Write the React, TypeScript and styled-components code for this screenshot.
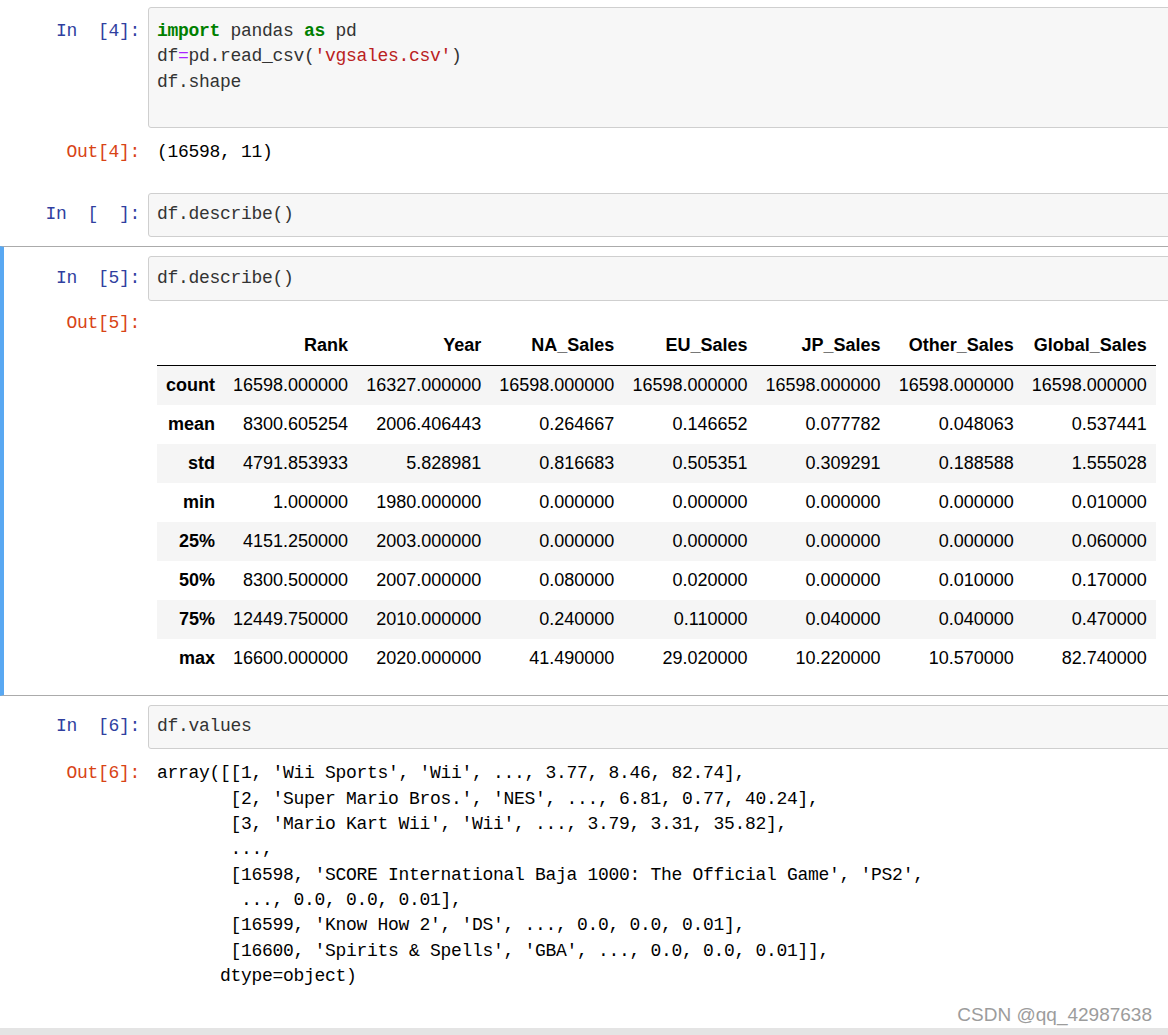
import React, { FC } from 'react'
import styled, { createGlobalStyle } from 'styled-components'

const GlobalStyle = createGlobalStyle`
	html, body {
		margin: 0;
		padding: 0;
		background: #ffffff;
	}
	#root {
		width: 1168px;
	}
`

const MONO = `'Liberation Mono', 'DejaVu Sans Mono', monospace`
const SANS = `'Liberation Sans', Arial, sans-serif`

type Stat = { name: string; values: string[] }

const COLUMNS = ['Rank', 'Year', 'NA_Sales', 'EU_Sales', 'JP_Sales', 'Other_Sales', 'Global_Sales']

const STATS: Stat[] = [
	{ name: 'count', values: ['16598.000000', '16327.000000', '16598.000000', '16598.000000', '16598.000000', '16598.000000', '16598.000000'] },
	{ name: 'mean', values: ['8300.605254', '2006.406443', '0.264667', '0.146652', '0.077782', '0.048063', '0.537441'] },
	{ name: 'std', values: ['4791.853933', '5.828981', '0.816683', '0.505351', '0.309291', '0.188588', '1.555028'] },
	{ name: 'min', values: ['1.000000', '1980.000000', '0.000000', '0.000000', '0.000000', '0.000000', '0.010000'] },
	{ name: '25%', values: ['4151.250000', '2003.000000', '0.000000', '0.000000', '0.000000', '0.000000', '0.060000'] },
	{ name: '50%', values: ['8300.500000', '2007.000000', '0.080000', '0.020000', '0.000000', '0.010000', '0.170000'] },
	{ name: '75%', values: ['12449.750000', '2010.000000', '0.240000', '0.110000', '0.040000', '0.040000', '0.470000'] },
	{ name: 'max', values: ['16600.000000', '2020.000000', '41.490000', '29.020000', '10.220000', '10.570000', '82.740000'] },
]

const ARRAY_OUT = [
	`array([[1, 'Wii Sports', 'Wii', ..., 3.77, 8.46, 82.74],`,
	`       [2, 'Super Mario Bros.', 'NES', ..., 6.81, 0.77, 40.24],`,
	`       [3, 'Mario Kart Wii', 'Wii', ..., 3.79, 3.31, 35.82],`,
	`       ...,`,
	`       [16598, 'SCORE International Baja 1000: The Official Game', 'PS2',`,
	`        ..., 0.0, 0.0, 0.01],`,
	`       [16599, 'Know How 2', 'DS', ..., 0.0, 0.0, 0.01],`,
	`       [16600, 'Spirits & Spells', 'GBA', ..., 0.0, 0.0, 0.01]],`,
	`      dtype=object)`,
]

type CodeCellProps = { count: string; lead?: number; children: React.ReactNode }

const CodeCell: FC<CodeCellProps> = ({ count, lead = 8.5, children }) => (
	<Row>
		<Prompt $kind="in" $lead={lead + 1}>{`In  [${count}]:`}</Prompt>
		<InputArea $lead={lead} $trail={17 - lead}>
			<Code>{children}</Code>
		</InputArea>
	</Row>
)

const StatsTable: FC = () => (
	<DataTable>
		<thead>
			<tr>
				<Th />
				{COLUMNS.map((c) => (
					<Th key={c}>{c}</Th>
				))}
			</tr>
		</thead>
		<tbody>
			{STATS.map((s) => (
				<tr key={s.name}>
					<Th>{s.name}</Th>
					{s.values.map((v, i) => (
						<Td key={i}>{v}</Td>
					))}
				</tr>
			))}
		</tbody>
	</DataTable>
)

const App: FC = () => {
	return (
		<>
			<GlobalStyle />
			<Page>
				<Notebook>
					<Cell>
						<CodeCell count="4" lead={11}>
							<Line>
								<Kw>import</Kw> pandas <Kw>as</Kw> pd
							</Line>
							<Line>
								df<Op>=</Op>pd.read_csv(<Str>'vgsales.csv'</Str>)
							</Line>
							<Line>df.shape</Line>
							<Line>{' '}</Line>
						</CodeCell>
						<OutputRow $gap={12} $tail={10}>
							<Prompt $kind="out">Out[4]:</Prompt>
							<OutText>
								<Line>(16598, 11)</Line>
							</OutText>
						</OutputRow>
					</Cell>

					<Cell>
						<CodeCell count="  ">
							<Line>df.describe()</Line>
						</CodeCell>
					</Cell>

					<Cell $selected>
						<CodeCell count="5">
							<Line>df.describe()</Line>
						</CodeCell>
						<OutputRow $gap={10} $tail={8}>
							<Prompt $kind="out">Out[5]:</Prompt>
							<TableWrap>
								<StatsTable />
							</TableWrap>
						</OutputRow>
					</Cell>

					<Cell>
						<CodeCell count="6">
							<Line>df.values</Line>
						</CodeCell>
						<OutputRow $gap={12} $tail={8}>
							<Prompt $kind="out">Out[6]:</Prompt>
							<OutText>
								{ARRAY_OUT.map((l, i) => (
									<Line key={i}>{l}</Line>
								))}
							</OutText>
						</OutputRow>
					</Cell>
				</Notebook>
				<BottomBar />
				<Watermark>CSDN @qq_42987638</Watermark>
			</Page>
		</>
	)
}

const Page = styled.div`
	position: relative;
	display: flex;
	flex-direction: column;
	width: 1168px;
	height: 1035px;
	overflow: hidden;
	background: #ffffff;
`

const Notebook = styled.div`
	flex: 1;
	margin-top: -2px;
`

const Cell = styled.div<{ $selected?: boolean }>`
	display: flex;
	flex-direction: column;
	margin-right: -40px;
	padding: 9px 0;
	border-left: 4px solid ${({ $selected }) => ($selected ? '#59a8f2' : 'transparent')};
	border-top: ${({ $selected }) => ($selected ? '1px solid #ababab' : 'none')};
	border-bottom: ${({ $selected }) => ($selected ? '1px solid #ababab' : 'none')};
`

const Row = styled.div`
	display: flex;
	align-items: flex-start;
`

const Prompt = styled.div<{ $kind: 'in' | 'out'; $lead?: number }>`
	flex: 0 0 136px;
	padding: ${({ $lead = 0 }) => $lead}px 8px 0 0;
	text-align: right;
	white-space: pre;
	font-family: ${MONO};
	font-size: 18px;
	letter-spacing: -0.3px;
	line-height: 25.4px;
	color: ${({ $kind }) => ($kind === 'in' ? '#303f9f' : '#d84315')};
`

const InputArea = styled.div<{ $lead: number; $trail: number }>`
	flex: 1;
	background: #f7f7f7;
	border: 1px solid #cfcfcf;
	border-radius: 3px;
	padding: ${({ $lead }) => $lead}px 8px ${({ $trail }) => $trail}px;
`

const Code = styled.div`
	font-family: ${MONO};
	font-size: 18px;
	letter-spacing: -0.3px;
	line-height: 25.4px;
	color: #333333;
`

const Line = styled.div`
	height: 25.4px;
	white-space: pre;
`

const Kw = styled.span`
	color: #008000;
	font-weight: bold;
`

const Op = styled.span`
	color: #aa22ff;
`

const Str = styled.span`
	color: #ba2121;
`

const OutputRow = styled.div<{ $gap: number; $tail: number }>`
	display: flex;
	align-items: flex-start;
	margin-top: ${({ $gap }) => $gap}px;
	padding-bottom: ${({ $tail }) => $tail}px;
`

const OutText = styled.div`
	padding-left: 9px;
	font-family: ${MONO};
	font-size: 18px;
	letter-spacing: -0.3px;
	line-height: 25.4px;
	color: #000000;
`

const TableWrap = styled.div`
	padding: 15px 0 0 9px;
`

const DataTable = styled.table`
	border-collapse: collapse;
	border-spacing: 0;
	font-family: ${SANS};
	font-size: 18px;
	color: #000000;

	thead tr {
		border-bottom: 1px solid #000000;
	}

	tbody tr:nth-child(odd) {
		background: #f5f5f5;
	}
`

const Th = styled.th`
	padding: 9px;
	line-height: 21px;
	text-align: right;
	font-weight: bold;
	white-space: nowrap;
`

const Td = styled.td`
	padding: 9px;
	line-height: 21px;
	text-align: right;
	white-space: nowrap;
`

const BottomBar = styled.div`
	flex: 0 0 7px;
	background: #e4e4e4;
`

const Watermark = styled.div`
	position: absolute;
	right: 16px;
	bottom: 9px;
	font-family: ${SANS};
	font-size: 19px;
	line-height: 22px;
	color: #9c9c9c;
	text-shadow: 0 0 2px #ffffff;
`

export default App
